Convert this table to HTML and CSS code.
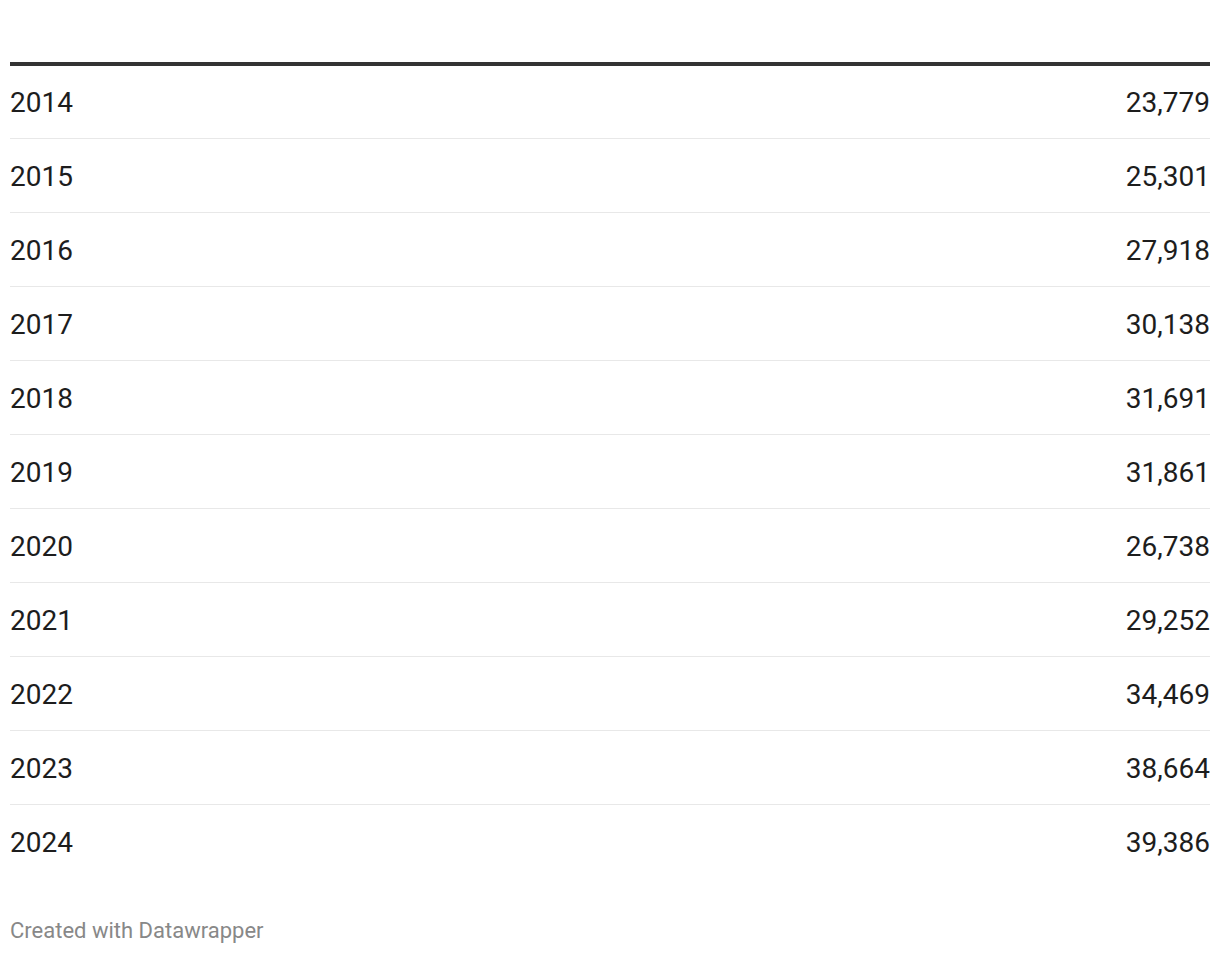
FILE: index.html
```html
<!DOCTYPE html>
<html>
<head>
<meta charset="utf-8">
<link rel="stylesheet" href="styles.css">
</head>
<body>
<div class="chart">
  <table class="data">
    <tbody>
      <tr><td>2014</td><td class="num">23,779</td></tr>
      <tr><td>2015</td><td class="num">25,301</td></tr>
      <tr><td>2016</td><td class="num">27,918</td></tr>
      <tr><td>2017</td><td class="num">30,138</td></tr>
      <tr><td>2018</td><td class="num">31,691</td></tr>
      <tr><td>2019</td><td class="num">31,861</td></tr>
      <tr><td>2020</td><td class="num">26,738</td></tr>
      <tr><td>2021</td><td class="num">29,252</td></tr>
      <tr><td>2022</td><td class="num">34,469</td></tr>
      <tr><td>2023</td><td class="num">38,664</td></tr>
      <tr><td>2024</td><td class="num">39,386</td></tr>
    </tbody>
  </table>
  <div class="footer">Created with Datawrapper</div>
</div>
</body>
</html>
```
FILE: styles.css
```css
html, body {
  margin: 0;
  padding: 0;
  background: #fff;
}
body {
  font-family: Roboto, "Liberation Sans", sans-serif;
  color: #1d1d1d;
}
.chart {
  padding: 62px 10px 0 10px;
}
.data {
  width: 100%;
  border-collapse: collapse;
  border-top: 4px solid #333;
}
.data td {
  font-size: 28px;
  height: 71px;
  padding: 2px 0 0 0;
  line-height: 1;
  vertical-align: middle;
  border-bottom: 1px solid #e8e8e8;
}
.data tr:first-child td {
  height: 70px;
}
.data tr:last-child td {
  border-bottom: none;
}
.data td.num {
  text-align: right;
}
.footer {
  margin-top: 40px;
  font-size: 22px;
  color: #888;
}
```
